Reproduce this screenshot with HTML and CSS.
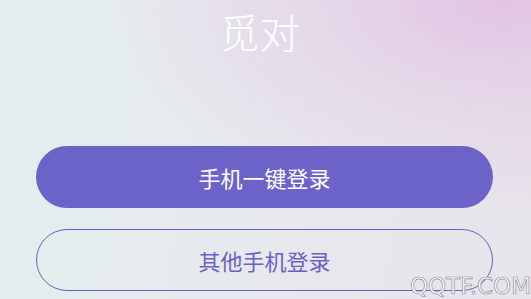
FILE: index.html
```html
<!DOCTYPE html>
<html lang="zh">
<head>
<meta charset="utf-8">
<link rel="stylesheet" href="styles.css">
</head>
<body>
<div class="page">
  <h1 class="title">觅对</h1>
  <div class="actions">
    <button class="btn btn-primary">手机一键登录</button>
    <button class="btn btn-outline">其他手机登录</button>
  </div>
  <div class="watermark">QQTF.COM</div>
</div>
</body>
</html>
```
FILE: styles.css
```css
html, body {
  margin: 0;
  padding: 0;
}
body {
  width: 531px;
  height: 299px;
  overflow: hidden;
  font-family: "Noto Sans CJK SC", "Noto Sans", sans-serif;
}
.page {
  position: relative;
  width: 531px;
  height: 299px;
  box-sizing: border-box;
  display: flex;
  flex-direction: column;
  align-items: center;
  background:
    radial-gradient(ellipse 75% 70% at 95% 0%, rgba(226, 196, 228, 1) 0%, rgba(228, 206, 230, 0.65) 45%, rgba(230, 230, 236, 0) 100%),
    linear-gradient(100deg, #e4eeef 0%, #e6e9ed 50%, #e7e3ea 100%);
}
.title {
  margin: 8px 0 0 0;
  font-size: 40px;
  line-height: 46px;
  font-weight: 300;
  color: #ffffff;
  letter-spacing: 0;
  transform: translateX(-6px);
}
.actions {
  margin-top: 92px;
  display: flex;
  flex-direction: column;
  gap: 21px;
  width: 457px;
  transform: translateX(-1px);
}
.btn {
  height: 62px;
  width: 100%;
  border-radius: 31px;
  font-family: "Noto Sans CJK SC", "Noto Sans", sans-serif;
  font-size: 22px;
  line-height: 1;
  padding: 0;
  cursor: pointer;
}
.btn-primary {
  background: #6b63c7;
  color: #ffffff;
  border: none;
}
.btn-outline {
  background: transparent;
  color: #6a62c1;
  border: 1.5px solid #6a62c1;
}
.watermark {
  position: absolute;
  right: 0;
  bottom: 0;
  font-family: "DejaVu Sans", sans-serif;
  font-size: 23px;
  letter-spacing: 0;
  color: #ffffff;
  -webkit-text-stroke: 0.7px #8a8f96;
  line-height: 26px;
}
```
